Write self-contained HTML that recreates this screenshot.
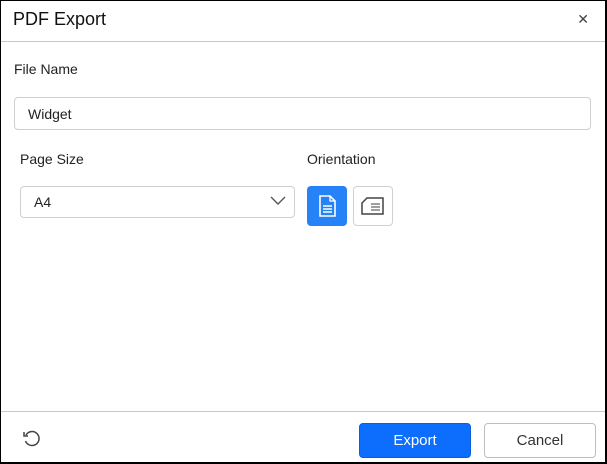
<!DOCTYPE html>
<html><head><style>
*{box-sizing:border-box;margin:0;padding:0}
body{width:607px;height:464px;background:#fff;font-family:"Liberation Sans",sans-serif;color:#212121;position:relative;overflow:hidden}
.frame{position:absolute;left:0;top:0;width:607px;height:464px;border:1px solid #000;border-right:2px solid #000;border-bottom:2px solid #000}
.abs{position:absolute}
.t{font-size:18px;color:#111;left:13px;top:9px}
.x{right:18px;top:11px;font-size:14px;color:#444}
.hl{left:1px;right:2px;height:1px;background:#c8c8c8}
.lbl{font-size:14px;color:#222}
.inp{border:1px solid #cfcfcf;border-radius:4px;font-size:14px;padding-left:13px;display:flex;align-items:center}
.btn{border-radius:4px;font-size:15px;display:flex;align-items:center;justify-content:center;padding-bottom:1px}
</style></head><body>
<div class="frame"></div>
<div class="abs t">PDF Export</div>
<div class="abs x">✕</div>
<div class="abs hl" style="top:41px"></div>
<div class="abs lbl" style="left:14px;top:61px">File Name</div>
<div class="abs inp" style="left:14px;top:97px;width:577px;height:33px">Widget</div>
<div class="abs lbl" style="left:20px;top:151px">Page Size</div>
<div class="abs inp" style="left:20px;top:186px;width:275px;height:32px">A4</div>
<svg class="abs" style="left:270px;top:196px" width="16" height="10" viewBox="0 0 16 10"><path d="M1 1l7 7 7-7" fill="none" stroke="#555" stroke-width="1.4"/></svg>
<div class="abs lbl" style="left:307px;top:151px">Orientation</div>
<div class="abs" style="left:307px;top:186px;width:40px;height:40px;background:#2583f7;border-radius:4px"></div>
<svg class="abs" style="left:318px;top:195px" width="19" height="22" viewBox="0 0 19 22"><path d="M2 1h10l5 5v15H2z" fill="none" stroke="#fff" stroke-width="1.6"/><path d="M12 1v5h5" fill="none" stroke="#fff" stroke-width="1.3"/><path d="M5 11h9M5 14h9M5 17h9" stroke="#fff" stroke-width="1.4"/></svg>
<div class="abs" style="left:353px;top:186px;width:40px;height:40px;border:1px solid #d0d0d0;border-radius:4px"></div>
<svg class="abs" style="left:361px;top:197px" width="24" height="19" viewBox="0 0 24 19"><path d="M6 1h16v16H1V6z" fill="none" stroke="#444" stroke-width="1.5"/><path d="M10 7h9M10 10h9M10 13h9" stroke="#666" stroke-width="1.3"/></svg>
<div class="abs hl" style="top:411px"></div>
<svg class="abs" style="left:22px;top:429px" width="20" height="20" viewBox="0 0 20 20"><path d="M4 6A7 7 0 1 1 3.5 12" fill="none" stroke="#444" stroke-width="1.5"/><path d="M2 3v4h4" fill="none" stroke="#444" stroke-width="1.5"/></svg>
<div class="abs btn" style="left:359px;top:423px;width:112px;height:35px;background:#0d6efd;color:#fff;border:1px solid #0b5ed7">Export</div>
<div class="abs btn" style="left:484px;top:423px;width:112px;height:35px;border:1px solid #bdbdbd;color:#333">Cancel</div>
</body></html>
